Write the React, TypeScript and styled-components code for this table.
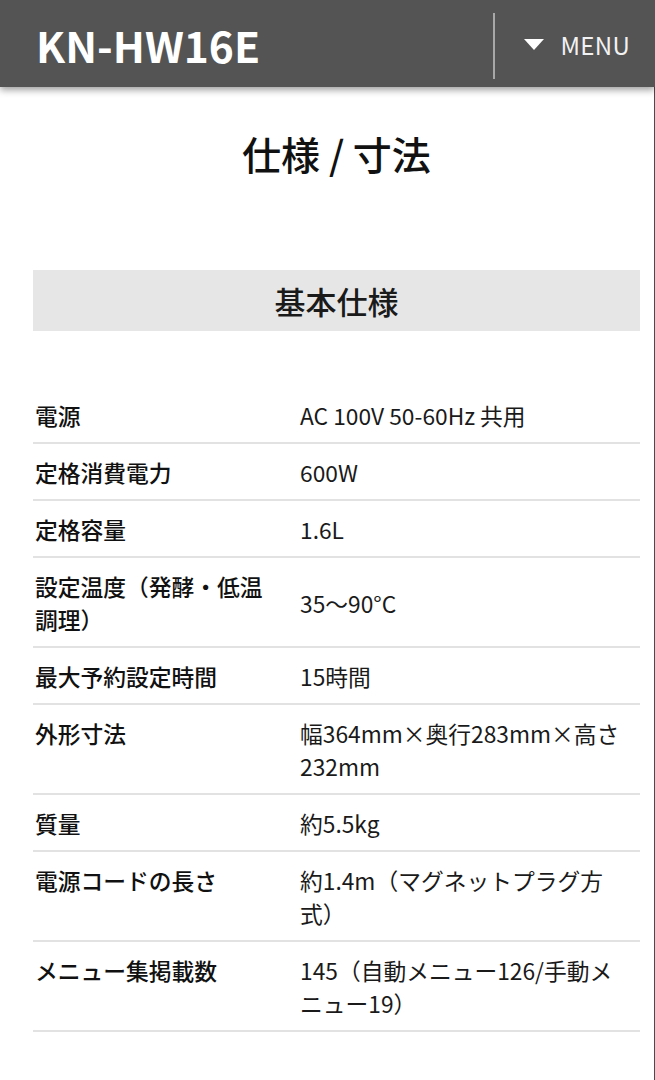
import React from "react";
import styled, { createGlobalStyle } from "styled-components";

const GlobalStyle = createGlobalStyle`
  html, body {
    margin: 0;
    padding: 0;
    background: #ffffff;
  }
  body {
    font-family: "Noto Sans CJK JP", "Noto Sans", sans-serif;
    color: #1a1a1a;
    -webkit-font-smoothing: antialiased;
  }
  * { box-sizing: border-box; }
`;

const Page = styled.div`
  min-height: 1080px;
  box-shadow: inset -1px 0 0 #4a4a4a;
`;

const Header = styled.header`
  height: 87px;
  background: #545454;
  display: flex;
  align-items: center;
  position: relative;
  z-index: 1;
  box-shadow: 0 3px 7px rgba(0, 0, 0, 0.38);
`;

const Brand = styled.h1`
  margin: 0;
  flex: 1;
  padding: 3px 0 0 36px;
  color: #ffffff;
  font-family: "Noto Sans CJK JP", "Noto Sans", sans-serif;
  font-weight: 700;
  font-size: 42.5px;
  line-height: 1;
  letter-spacing: 0;
`;

const Divider = styled.span`
  width: 2px;
  height: 66px;
  margin-top: 5px;
  background: #a8a8a8;
`;

const MenuButton = styled.button`
  border: 0;
  background: transparent;
  display: flex;
  align-items: center;
  gap: 17px;
  padding: 2px 25px 0 29px;
  color: #f2f2f2;
  font-family: "Noto Sans CJK JP", "Noto Sans", sans-serif;
  font-size: 24px;
  font-weight: 400;
  letter-spacing: 0.3px;
  cursor: pointer;
`;

const Triangle = styled.span`
  width: 0;
  height: 0;
  border-left: 10.5px solid transparent;
  border-right: 10.5px solid transparent;
  border-top: 11px solid #ffffff;
`;

const Main = styled.main`
  padding: 37px 15px 40px 33px;
`;

const PageTitle = styled.h2`
  margin: 0;
  text-align: center;
  font-size: 39px;
  font-weight: 500;
  line-height: 58px;
  color: #111;
`;

const SectionHeading = styled.h3`
  margin: 88px 0 0;
  height: 61px;
  background: #e6e6e6;
  display: flex;
  align-items: center;
  justify-content: center;
  font-size: 31px;
  font-weight: 500;
  color: #1a1a1a;
`;

const SpecList = styled.dl`
  margin: 56px 0 0;
  padding: 0;
`;

const SpecRow = styled.div`
  display: grid;
  grid-template-columns: 267px 1fr;
  border-bottom: 2px solid #e2e2e2;
  padding: 12px 0 10px;
`;

const SpecLabel = styled.dt`
  margin: 0;
  align-self: start;
  padding: 0 20px 0 2px;
  font-size: 22.75px;
  line-height: 33px;
  font-weight: 500;
  color: #111;
`;

const SpecValue = styled.dd`
  margin: 0;
  align-self: center;
  padding: 0 14px 0 0;
  font-size: 22.75px;
  line-height: 33px;
  font-weight: 400;
  color: #1a1a1a;
`;

const specs: [string, string][] = [
  ["電源", "AC 100V 50-60Hz 共用"],
  ["定格消費電力", "600W"],
  ["定格容量", "1.6L"],
  ["設定温度（発酵・低温調理）", "35〜90°C"],
  ["最大予約設定時間", "15時間"],
  ["外形寸法", "幅364mm×奥行283mm×高さ232mm"],
  ["質量", "約5.5kg"],
  ["電源コードの長さ", "約1.4m（マグネットプラグ方式）"],
  ["メニュー集掲載数", "145（自動メニュー126/手動メニュー19）"],
];

export default function App() {
  return (
    <Page>
      <GlobalStyle />
      <Header>
        <Brand>KN-HW16E</Brand>
        <Divider />
        <MenuButton>
          <Triangle />
          MENU
        </MenuButton>
      </Header>
      <Main>
        <PageTitle>仕様 / 寸法</PageTitle>
        <SectionHeading>基本仕様</SectionHeading>
        <SpecList>
          {specs.map(([label, value]) => (
            <SpecRow key={label}>
              <SpecLabel>{label}</SpecLabel>
              <SpecValue>{value}</SpecValue>
            </SpecRow>
          ))}
        </SpecList>
      </Main>
    </Page>
  );
}
